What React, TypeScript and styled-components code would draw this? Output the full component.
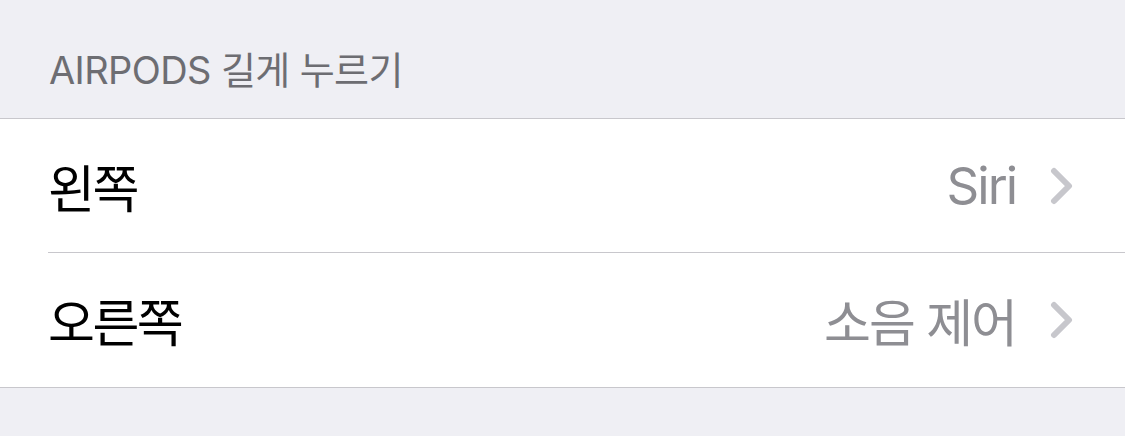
import React from 'react'
import styled, { createGlobalStyle } from 'styled-components'

const GlobalStyle = createGlobalStyle`
  html, body {
    margin: 0;
    padding: 0;
    background-color: #efeff4;
  }

  body {
    font-family: Inter, "Noto Sans CJK KR", sans-serif;
    -webkit-font-smoothing: antialiased;
  }
`

interface IRow {
  label: string
  value: string
}

const rows: IRow[] = [
  { label: '왼쪽', value: 'Siri' },
  { label: '오른쪽', value: '소음 제어' },
]

function Chevron() {
  return (
    <svg width='24' height='38' viewBox='0 0 24 38' fill='none'>
      <path d='M4 4 L19 19 L4 34' stroke='#c7c7cc' strokeWidth='6' strokeLinecap='round' strokeLinejoin='round' />
    </svg>
  )
}

function App() {
  return (
    <Page>
      <GlobalStyle />
      <SectionHeader>AIRPODS 길게 누르기</SectionHeader>
      <Group>
        {rows.map((row, i) => (
          <Row key={row.label} last={i === rows.length - 1}>
            <Label>{row.label}</Label>
            <Detail>
              <Value>{row.value}</Value>
              <Chevron />
            </Detail>
          </Row>
        ))}
      </Group>
    </Page>
  )
}

export default App

const Page = styled.div`
  background-color: #efeff4;
  display: flex;
  flex-direction: column;
  height: 436px;
  width: 1125px;
`

const SectionHeader = styled.div`
  align-items: flex-end;
  box-sizing: border-box;
  color: #6d6d72;
  display: flex;
  font-size: 38px;
  height: 118px;
  letter-spacing: -0.6px;
  padding: 0 0 23px 49px;
  text-transform: uppercase;
`

const Group = styled.div`
  background-color: #ffffff;
  border-bottom: 1px solid #c8c7cc;
  border-top: 1px solid #c8c7cc;
`

const Row = styled.div<{ last?: boolean }>`
  align-items: center;
  box-sizing: border-box;
  display: flex;
  height: 134px;
  justify-content: space-between;
  margin-left: 48px;
  padding-right: 51px;
  border-bottom: ${({ last }) => (last ? 'none' : '1px solid #c8c7cc')};
`

const Label = styled.span`
  color: #000000;
  font-size: 51px;
  letter-spacing: -2.5px;
`

const Detail = styled.div`
  align-items: center;
  display: flex;
  gap: 34px;
`

const Value = styled.span`
  color: #8e8e93;
  font-size: 51px;
  letter-spacing: -2px;
`
